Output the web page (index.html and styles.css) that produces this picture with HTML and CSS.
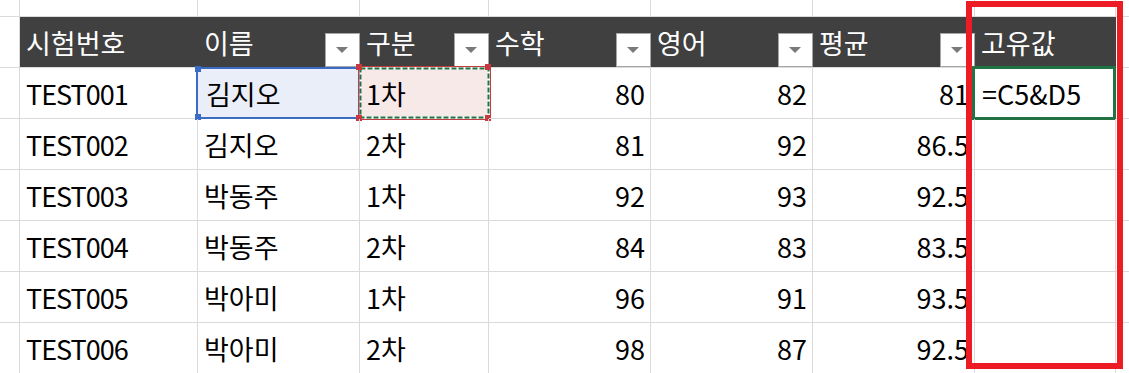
FILE: index.html
```html
<!DOCTYPE html>
<html lang="ko">
<head>
<meta charset="utf-8">
<title>Sheet</title>
<link rel="stylesheet" href="styles.css">
</head>
<body>
<div class="sheet">
  <!-- top partial row -->
  <div class="c"></div><div class="c"></div><div class="c"></div><div class="c"></div><div class="c"></div><div class="c"></div><div class="c"></div><div class="c"></div><div class="c last"></div>

  <!-- header row -->
  <div class="c"></div>
  <div class="h">시험번호</div>
  <div class="h">이름<span class="filter"></span></div>
  <div class="h">구분<span class="filter"></span></div>
  <div class="h">수학<span class="filter"></span></div>
  <div class="h">영어<span class="filter"></span></div>
  <div class="h">평균<span class="filter"></span></div>
  <div class="h">고유값</div>
  <div class="c last"></div>

  <!-- row 1 -->
  <div class="c"></div>
  <div class="c id">TEST001</div>
  <div class="c sel-blue">김지오<span class="ring-blue"><i class="hd tl"></i><i class="hd bl"></i></span></div>
  <div class="c sel-copy">1차<svg class="marquee" viewBox="0 0 133 54" preserveAspectRatio="none"><rect x="0.5" y="0.5" width="132" height="53" fill="none" stroke="#c8393f" stroke-width="1"/><rect x="2.5" y="2.5" width="128" height="49" fill="none" stroke="#ffffff" stroke-width="2"/><rect x="2.5" y="2.5" width="128" height="49" fill="none" stroke="#217346" stroke-width="2" stroke-dasharray="5 2"/></svg><i class="hr tl"></i><i class="hr tr"></i><i class="hr bl"></i><i class="hr br"></i></div>
  <div class="c n">80</div>
  <div class="c n">82</div>
  <div class="c n">81</div>
  <div class="c active">=C5&amp;D5<span class="ring-green"></span></div>
  <div class="c last"></div>

  <!-- row 2 -->
  <div class="c"></div>
  <div class="c id">TEST002</div>
  <div class="c">김지오</div>
  <div class="c">2차</div>
  <div class="c n">81</div>
  <div class="c n">92</div>
  <div class="c n">86.5</div>
  <div class="c"></div>
  <div class="c last"></div>

  <!-- row 3 -->
  <div class="c"></div>
  <div class="c id">TEST003</div>
  <div class="c">박동주</div>
  <div class="c">1차</div>
  <div class="c n">92</div>
  <div class="c n">93</div>
  <div class="c n">92.5</div>
  <div class="c"></div>
  <div class="c last"></div>

  <!-- row 4 -->
  <div class="c"></div>
  <div class="c id">TEST004</div>
  <div class="c">박동주</div>
  <div class="c">2차</div>
  <div class="c n">84</div>
  <div class="c n">83</div>
  <div class="c n">83.5</div>
  <div class="c"></div>
  <div class="c last"></div>

  <!-- row 5 -->
  <div class="c"></div>
  <div class="c id">TEST005</div>
  <div class="c">박아미</div>
  <div class="c">1차</div>
  <div class="c n">96</div>
  <div class="c n">91</div>
  <div class="c n">93.5</div>
  <div class="c"></div>
  <div class="c last"></div>

  <!-- row 6 -->
  <div class="c"></div>
  <div class="c id">TEST006</div>
  <div class="c">박아미</div>
  <div class="c">2차</div>
  <div class="c n">98</div>
  <div class="c n">87</div>
  <div class="c n">92.5</div>
  <div class="c"></div>
  <div class="c last"></div>

  <div class="highlight"></div>
</div>
</body>
</html>
```

FILE: styles.css
```css
* { box-sizing: border-box; }

html, body {
  margin: 0;
  padding: 0;
  background: #ffffff;
}

body {
  width: 1129px;
  height: 373px;
  overflow: hidden;
  font-family: "Noto Sans CJK KR", "Noto Sans", sans-serif;
  font-size: 27px;
  color: #000000;
}

.sheet {
  position: relative;
  display: grid;
  grid-template-columns: 20px 178px 162px 129px 162px 162px 162px 141px 1fr;
  grid-template-rows: 17px repeat(7, 51px);
  width: 1129px;
}

.c {
  position: relative;
  display: flex;
  align-items: center;
  padding: 0 6px;
  border-right: 1px solid #dadada;
  border-bottom: 1px solid #dadada;
  white-space: nowrap;
  line-height: 1;
}

.c.last { border-right: none; }

.c.id { letter-spacing: -1px; }

.c.n { justify-content: flex-end; padding-right: 5px; }

.h {
  position: relative;
  display: flex;
  align-items: center;
  padding: 0 6px;
  background: #404040;
  color: #ffffff;
  border-bottom: 1px solid #dadada;
  white-space: nowrap;
  line-height: 1;
}

.filter {
  position: absolute;
  right: 0;
  bottom: 0;
  width: 35px;
  height: 34px;
  background: #ffffff;
  border: 1px solid #a6a6a6;
}

.filter::after {
  content: "";
  position: absolute;
  left: 10px;
  top: 13px;
  width: 0;
  height: 0;
  border-left: 6px solid transparent;
  border-right: 6px solid transparent;
  border-top: 6px solid #7a7a7a;
}

/* selected name cell */
.sel-blue {
  background: #e9eef8;
  padding-left: 8px;
}

.ring-blue {
  position: absolute;
  left: -2px;
  top: -1px;
  right: -1px;
  bottom: -1px;
  border: 2px solid #3a6cc6;
}

.hd {
  position: absolute;
  width: 6px;
  height: 6px;
  background: #3a6cc6;
}
.hd.tl { left: -3px; top: -3px; }
.hd.bl { left: -3px; bottom: -3px; }

/* copy marquee cell */
.sel-copy {
  background: #f8e9e9;
}

.marquee {
  position: absolute;
  left: -2px;
  top: -2px;
  width: 133px;
  height: 54px;
}

.hr {
  position: absolute;
  width: 6px;
  height: 6px;
  background: #c8393f;
}
.hr.tl { left: -4px; top: -4px; }
.hr.tr { right: -3px; top: -4px; }
.hr.bl { left: -4px; bottom: -3px; }
.hr.br { right: -3px; bottom: -3px; }

/* active cell */
.active { padding-left: 7px; }

.ring-green {
  position: absolute;
  left: -3px;
  top: -2px;
  right: -1px;
  bottom: -2px;
  border: 3px solid #217346;
}

/* red annotation box */
.highlight {
  position: absolute;
  left: 966px;
  top: 1px;
  width: 157px;
  height: 368px;
  border: 6px solid #ed1c24;
  pointer-events: none;
}
```
